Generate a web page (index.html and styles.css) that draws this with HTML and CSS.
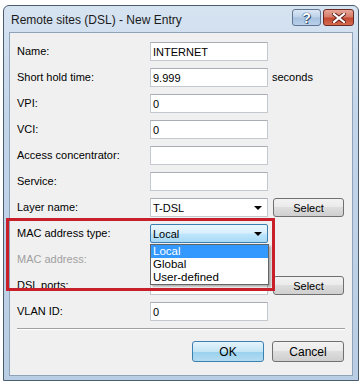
FILE: index.html
```html
<!DOCTYPE html>
<html lang="en">
<head>
    <meta charset="UTF-8">
    <title>Remote sites (DSL) - New Entry</title>
    <link rel="stylesheet" href="styles.css">
</head>
<body>
    <div class="window">
        <!-- Title bar -->
        <div class="titlebar">
            <span class="title">Remote sites (DSL) - New Entry</span>
            <div class="caption-btns">
                <div class="cap-btn help">?</div>
                <div class="cap-btn close">
                    <svg width="14" height="10" viewBox="0 0 14 10">
                        <path d="M2 1 L12 9 M12 1 L2 9" stroke="#5a1e18" stroke-width="4" stroke-linecap="square"/>
                        <path d="M2 1 L12 9 M12 1 L2 9" stroke="#fff" stroke-width="2.2" stroke-linecap="square"/>
                    </svg>
                </div>
            </div>
        </div>

        <!-- Dialog body -->
        <div class="client">
            <div class="row">
                <label>Name:</label>
                <div class="field">INTERNET</div>
            </div>
            <div class="row">
                <label>Short hold time:</label>
                <div class="field">9.999</div>
                <span class="unit">seconds</span>
            </div>
            <div class="row">
                <label>VPI:</label>
                <div class="field">0</div>
            </div>
            <div class="row">
                <label>VCI:</label>
                <div class="field">0</div>
            </div>
            <div class="row">
                <label>Access concentrator:</label>
                <div class="field"></div>
            </div>
            <div class="row">
                <label>Service:</label>
                <div class="field"></div>
            </div>
            <div class="row">
                <label>Layer name:</label>
                <div class="field combo">T-DSL<span class="arrow"></span></div>
                <div class="btn">Select</div>
            </div>
            <div class="row">
                <label>MAC address type:</label>
                <div class="field combo focused">Local<span class="arrow"></span></div>
            </div>
            <div class="row">
                <label class="disabled">MAC address:</label>
                <div class="field disabled-field"></div>
            </div>
            <div class="row">
                <label>DSL ports:</label>
                <div class="field"></div>
                <div class="btn">Select</div>
            </div>
            <div class="row">
                <label>VLAN ID:</label>
                <div class="field">0</div>
            </div>

            <div class="separator"></div>

            <div class="actions">
                <div class="btn default">OK</div>
                <div class="btn">Cancel</div>
            </div>
        </div>

        <!-- Open combo list -->
        <ul class="dropdown">
            <li class="selected">Local</li>
            <li>Global</li>
            <li>User-defined</li>
        </ul>

        <!-- Highlight frame -->
        <div class="highlight"></div>
    </div>
</body>
</html>
```

FILE: styles.css
```css
* {
    margin: 0;
    padding: 0;
    box-sizing: border-box;
}

body {
    font-family: "Liberation Sans", Arial, sans-serif;
    font-size: 11px;
    background-color: #ffffff;
    color: #000;
}

.window {
    position: relative;
    margin: 5px 0 0 3px;
    width: 356px;
    height: 376px;
    border: 1px solid #4d5d70;
    border-radius: 6px 6px 0 0;
    padding: 0 5px 5px 5px;
    background: linear-gradient(to bottom, #d6e3f1 0%, #c3d5e9 30%, #b9cde4 100%);
}

/* Title bar */
.titlebar {
    height: 26px;
    display: flex;
    justify-content: space-between;
    align-items: flex-start;
}

.title {
    font-size: 12px;
    margin: 7px 0 0 2px;
    color: #1a1a1a;
}

.caption-btns {
    display: flex;
    gap: 2px;
    margin-top: 3px;
    margin-right: -1px;
}

.cap-btn {
    height: 17px;
    border: 1px solid #5f7590;
    border-radius: 3px;
    display: flex;
    align-items: center;
    justify-content: center;
}

.cap-btn.help {
    width: 29px;
    background: linear-gradient(to bottom, #dbe7f4 0%, #bcd1e8 48%, #a6c0de 52%, #b8d0ea 100%);
    color: #fff;
    font-size: 14px;
    font-weight: bold;
    text-shadow: 0 0 1px #2c4560, 0 0 1px #2c4560, 1px 1px 0 #3d5a7a;
}

.cap-btn.close {
    width: 31px;
    border-color: #6a2a22;
    background: linear-gradient(to bottom, #e8a597 0%, #d57a68 48%, #c2462f 52%, #d46b4f 100%);
}

/* Client area */
.client {
    height: 344px;
    background-color: #f0f0f0;
    border: 1px solid #8ea2ba;
    padding: 9px 7px 0 7px;
}

.row {
    display: flex;
    align-items: center;
    height: 19px;
    margin-bottom: 7px;
}

.row label {
    width: 133px;
    padding-bottom: 2px;
}

.row label.disabled {
    color: #a0a0a0;
}

.field {
    position: relative;
    width: 118px;
    height: 19px;
    background-color: #fff;
    border: 1px solid #c4c9d0;
    border-top-color: #a9aeb6;
    padding: 0 0 0 2px;
    display: flex;
    align-items: center;
}

.disabled-field {
    background-color: #f4f4f4;
}

.combo .arrow {
    position: absolute;
    right: 5px;
    top: 7px;
    border-left: 4px solid transparent;
    border-right: 4px solid transparent;
    border-top: 4px solid #000;
}

.combo.focused {
    border-color: #3c7fb1;
    border-radius: 2px;
    background: linear-gradient(to bottom, #eaf6fd 0%, #d9f0fc 45%, #bee6fd 55%, #a7d9f5 100%);
}

.unit {
    margin-left: 4px;
    padding-bottom: 2px;
}

.btn {
    height: 19px;
    width: 71px;
    margin-left: 5px;
    border: 1px solid #707070;
    border-radius: 3px;
    background: linear-gradient(to bottom, #f2f2f2 0%, #ebebeb 45%, #dddddd 50%, #cfcfcf 100%);
    display: flex;
    align-items: center;
    justify-content: center;
}

.separator {
    height: 1px;
    width: 328px;
    margin-top: 6px;
    background-color: #a0a0a0;
    border-bottom: 1px solid #fff;
    box-sizing: content-box;
}

.actions {
    display: flex;
    justify-content: flex-end;
    gap: 3px;
    margin-top: 11px;
    padding-right: 1px;
}

.actions .btn {
    height: 21px;
    width: 72px;
    font-size: 12px;
}

.actions .btn.default {
    border-color: #3c7fb1;
    background: linear-gradient(to bottom, #e5f4fc 0%, #c4e5f6 50%, #98d1ef 51%, #b5dcf1 100%);
}

/* Open combo list */
.dropdown {
    position: absolute;
    left: 146px;
    top: 238px;
    width: 119px;
    list-style: none;
    background-color: #fff;
    border: 1px solid #646464;
    box-shadow: 2px 2px 2px rgba(0, 0, 0, 0.3);
}

.dropdown li {
    height: 13px;
    line-height: 13px;
    padding-left: 2px;
    font-size: 11.5px;
}

.dropdown li.selected {
    background-color: #3399ff;
    color: #fff;
}

/* Red highlight frame */
.highlight {
    position: absolute;
    left: 2px;
    top: 212px;
    width: 269px;
    height: 73px;
    border: 3px solid #c8202a;
}
```
